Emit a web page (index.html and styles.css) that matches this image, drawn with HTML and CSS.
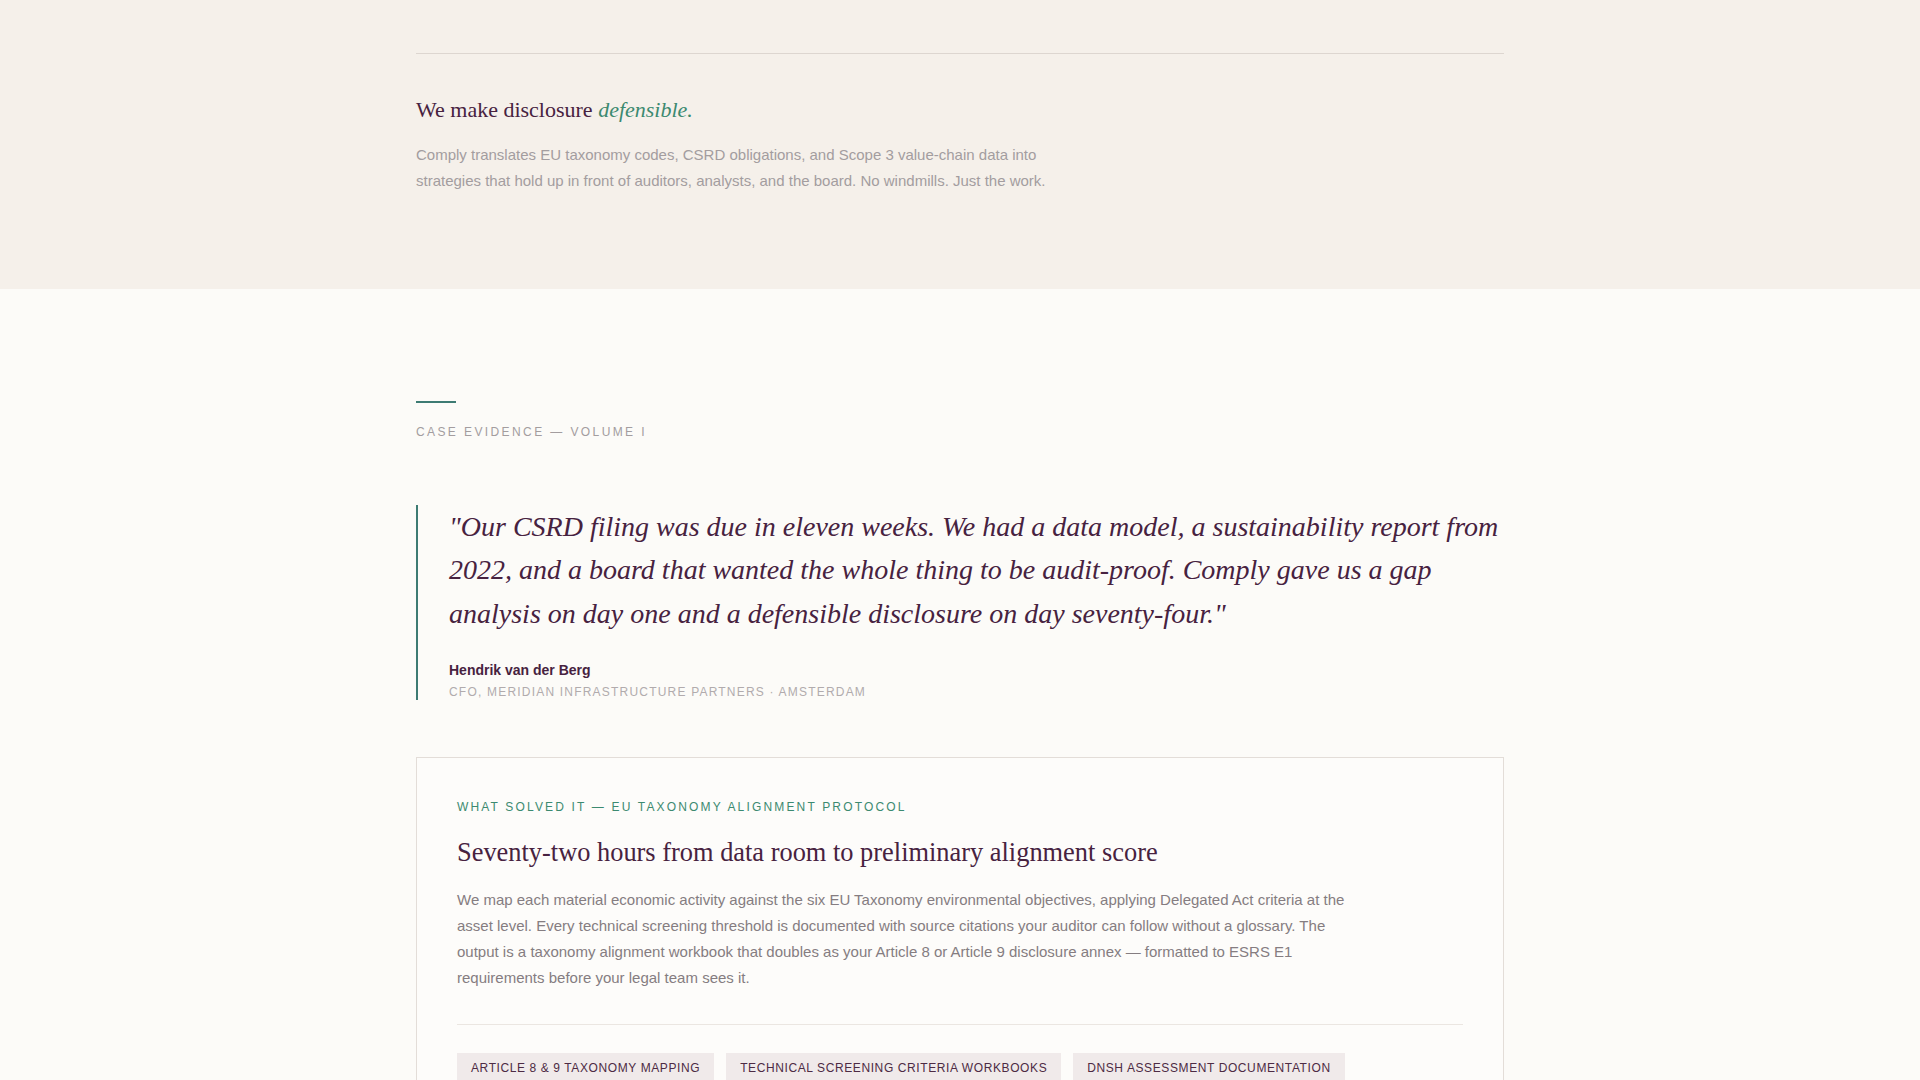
FILE: index.html
```html
<!DOCTYPE html>
<html lang="en">

<head>
    <meta charset="UTF-8" />
    <meta name="viewport" content="width=device-width, initial-scale=1.0" />
    <title>Comply - Case Evidence</title>
    <link rel="stylesheet" href="styles.css">
</head>

<body>
    <!-- Intro band -->
    <section class="intro">
        <div class="container">
            <div class="intro-rule"></div>
            <h2 class="intro-title">We make disclosure <em>defensible.</em></h2>
            <p class="intro-text">Comply translates EU taxonomy codes, CSRD obligations, and Scope 3 value-chain data into strategies that hold up in front of auditors, analysts, and the board. No windmills. Just the work.</p>
        </div>
    </section>

    <!-- Case evidence -->
    <section class="evidence">
        <div class="container">
            <div class="accent-bar"></div>
            <p class="eyebrow">Case Evidence — Volume I</p>

            <blockquote class="quote">
                <p class="quote-text">"Our CSRD filing was due in eleven weeks. We had a data model, a sustainability report from 2022, and a board that wanted the whole thing to be audit-proof. Comply gave us a gap analysis on day one and a defensible disclosure on day seventy-four."</p>
                <div class="quote-name">Hendrik van der Berg</div>
                <div class="quote-role">CFO, Meridian Infrastructure Partners · Amsterdam</div>
            </blockquote>

            <div class="solution-card">
                <p class="eyebrow eyebrow-green">What solved it — EU Taxonomy Alignment Protocol</p>
                <h3 class="solution-title">Seventy-two hours from data room to preliminary alignment score</h3>
                <p class="solution-text">We map each material economic activity against the six EU Taxonomy environmental objectives, applying Delegated Act criteria at the asset level. Every technical screening threshold is documented with source citations your auditor can follow without a glossary. The output is a taxonomy alignment workbook that doubles as your Article 8 or Article 9 disclosure annex — formatted to ESRS E1 requirements before your legal team sees it.</p>
                <div class="tags">
                    <span class="tag">Article 8 &amp; 9 Taxonomy Mapping</span>
                    <span class="tag">Technical Screening Criteria Workbooks</span>
                    <span class="tag">DNSH Assessment Documentation</span>
                </div>
            </div>
        </div>
    </section>
</body>

</html>
```

FILE: styles.css
```css
:root {
    --plum: #472240;
    --plum-soft: #4d2b44;
    --teal: #3d7b73;
    --green: #3c8a70;
    --sand: #f5f0ea;
    --paper: #fcfbf8;
    --grey: #a39d9f;
    --grey-dark: #857d81;
    --border-color: #e3ddd8;
}

* {
    box-sizing: border-box;
    margin: 0;
    padding: 0;
}

body {
    font-family: "Liberation Sans", Arial, sans-serif;
    color: var(--plum);
    background-color: var(--paper);
    min-height: 100vh;
}

.container {
    max-width: 1088px;
    margin: 0 auto;
}

/* Intro band */
.intro {
    background-color: var(--sand);
    padding: 53px 0 95px;
}

.intro-rule {
    height: 1px;
    background: #ddd6d0;
}

.intro-title {
    font-family: "Liberation Serif", "Times New Roman", serif;
    font-weight: 400;
    font-size: 22px;
    line-height: 1.3;
    margin-top: 42px;
    color: var(--plum);
}

.intro-title em {
    color: var(--green);
}

.intro-text {
    max-width: 640px;
    margin-top: 17px;
    font-size: 15px;
    line-height: 1.75;
    color: var(--grey);
}

/* Evidence section */
.evidence {
    padding: 112px 0 80px;
}

.accent-bar {
    width: 40px;
    height: 2px;
    background: var(--teal);
}

.eyebrow {
    margin-top: 21px;
    font-size: 12px;
    line-height: 16px;
    letter-spacing: 0.2em;
    text-transform: uppercase;
    color: var(--grey);
}

.eyebrow-green {
    margin-top: 0;
    letter-spacing: 0.18em;
    color: var(--green);
}

.quote {
    margin-top: 65px;
    border-left: 2px solid var(--teal);
    padding-left: 31px;
}

.quote-text {
    font-family: "Liberation Serif", "Times New Roman", serif;
    font-style: italic;
    font-size: 28px;
    line-height: 1.55;
    color: var(--plum);
}

.quote-name {
    margin-top: 25px;
    font-size: 14px;
    line-height: 20px;
    font-weight: 700;
    color: var(--plum);
}

.quote-role {
    margin-top: 4px;
    font-size: 12px;
    line-height: 16px;
    letter-spacing: 0.1em;
    text-transform: uppercase;
    color: #b1abad;
}

/* Solution card */
.solution-card {
    margin-top: 57px;
    background: #fdfcfa;
    border: 1px solid var(--border-color);
    padding: 41px 40px 40px;
}

.solution-title {
    margin-top: 20px;
    font-family: "Liberation Serif", "Times New Roman", serif;
    font-weight: 400;
    font-size: 26.4px;
    line-height: 1.3;
    color: var(--plum);
}

.solution-text {
    max-width: 900px;
    margin-top: 17px;
    font-size: 15px;
    line-height: 1.75;
    color: var(--grey-dark);
}

.tags {
    display: flex;
    flex-wrap: wrap;
    gap: 12px;
    margin-top: 32px;
    padding-top: 28px;
    border-top: 1px solid #ebe6e1;
}

.tag {
    background: #f0eaea;
    padding: 8px 14px;
    font-size: 12px;
    line-height: 14px;
    letter-spacing: 0.05em;
    text-transform: uppercase;
    color: var(--plum-soft);
}
```
